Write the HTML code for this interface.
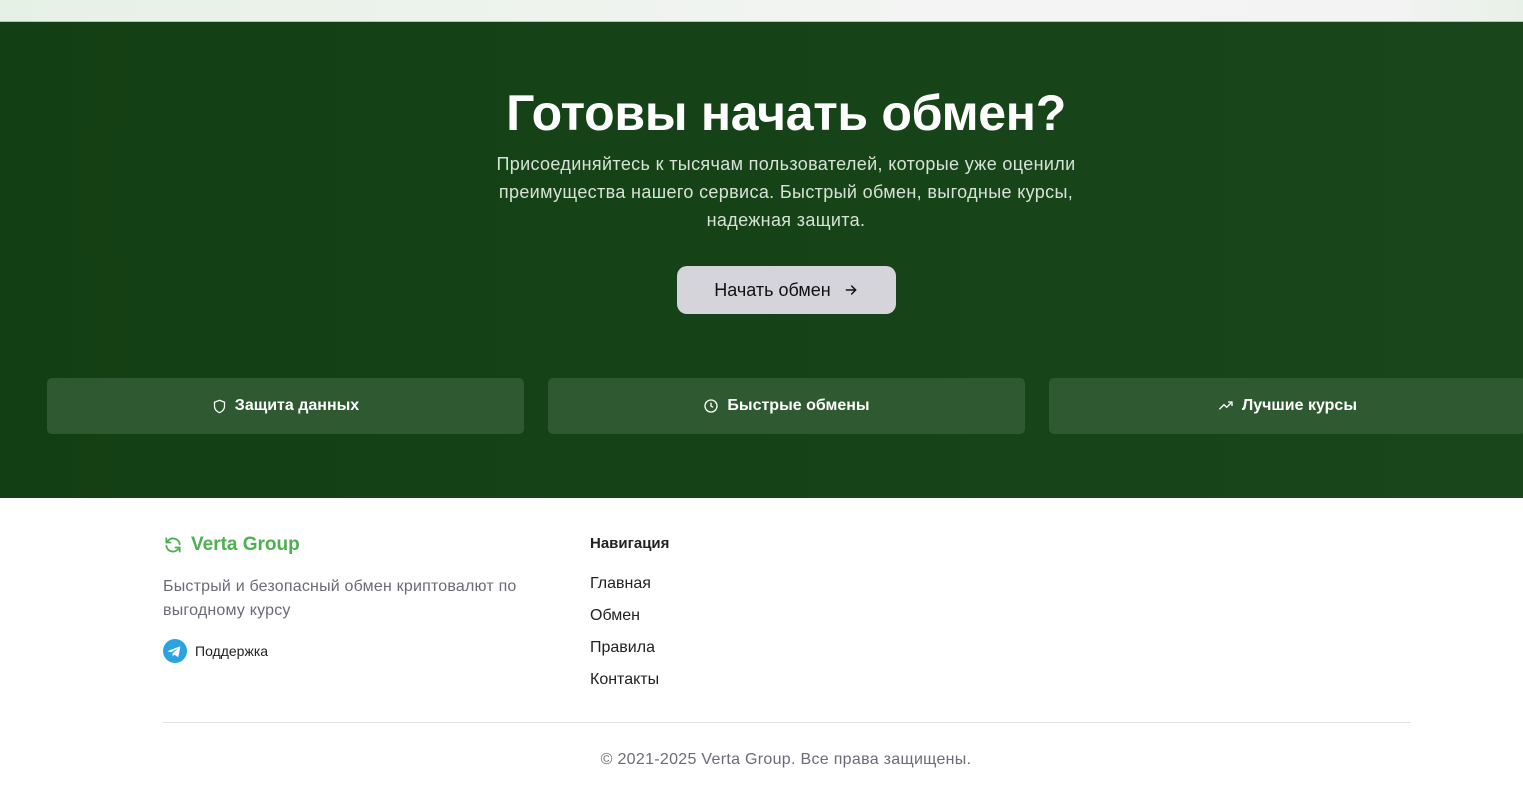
<!DOCTYPE html>
<html><head><meta charset="utf-8"><style>
*{margin:0;padding:0;box-sizing:border-box}
body{width:1523px;height:789px;overflow:hidden;background:#fff;font-family:"Liberation Sans","DejaVu Sans",sans-serif;position:relative}
.top{position:absolute;left:0;top:0;width:1523px;height:21px;background:linear-gradient(90deg,#e6f1e6,#f3f4f3 60%,#f4f3f4 90%,#e8f1e8)}
.hero{position:absolute;left:0;top:21px;width:1523px;height:477px;background:linear-gradient(90deg,#133f14,#1a461c);border-top:1px solid #a9cfa9}
h1{position:absolute;top:62px;left:286px;width:1000px;text-align:center;color:#fff;font-size:50px;font-weight:bold;letter-spacing:-0.3px}
.sub{position:absolute;top:128px;left:481px;width:610px;text-align:center;color:#d6e3d6;font-size:18px;line-height:28px;letter-spacing:0.35px}
.btn{position:absolute;left:677px;top:244px;width:219px;height:48px;border-radius:10px;background:#d6d4db;color:#111;font-size:18px;display:flex;align-items:center;justify-content:center;gap:12px}
.card{position:absolute;top:356px;width:477px;height:56px;border-radius:5px;background:#2f5a31;color:#fff;font-weight:bold;font-size:16px;display:flex;align-items:center;justify-content:center;gap:8px}
.t{position:absolute;color:#222;font-size:16px}
</style></head><body>
<div class="top"></div>
<div class="hero">
<h1>Готовы начать обмен?</h1>
<div class="sub">Присоединяйтесь к тысячам пользователей, которые уже оценили преимущества нашего сервиса. Быстрый обмен, выгодные курсы, надежная защита.</div>
<div class="btn">Начать обмен <svg width="16" height="16" viewBox="0 0 24 24" fill="none" stroke="#111" stroke-width="2.2" stroke-linecap="round"><path d="M5 12h14M13 6l6 6-6 6"/></svg></div>
<div class="card" style="left:47px"><svg width="15" height="15" viewBox="0 0 24 24" fill="none" stroke="#fff" stroke-width="2"><path d="M12 2l8 3v7c0 5-4 8-8 10-4-2-8-5-8-10V5z"/></svg>Защита данных</div>
<div class="card" style="left:548px"><svg width="16" height="16" viewBox="0 0 24 24" fill="none" stroke="#fff" stroke-width="2"><circle cx="12" cy="12" r="9"/><path d="M12 7v5l3 2"/></svg>Быстрые обмены</div>
<div class="card" style="left:1049px"><svg width="16" height="16" viewBox="0 0 24 24" fill="none" stroke="#fff" stroke-width="2"><path d="M2 17l7-7 4 4 8-8M15 6h6v6"/></svg>Лучшие курсы</div>
</div>
<div style="position:absolute;left:163px;top:534px;display:flex;align-items:center;gap:8px;color:#4caf50;font-weight:bold;font-size:19px"><svg width="20" height="20" viewBox="0 0 24 24" fill="none" stroke="#4caf50" stroke-width="2.2" stroke-linecap="round"><path d="M20 11a8 8 0 0 0-14-4l-2 2M4 4v5h5M4 13a8 8 0 0 0 14 4l2-2M20 20v-5h-5"/></svg>Verta Group</div>
<div style="position:absolute;left:163px;top:575px;width:390px;color:#6b6b76;font-size:16px;line-height:24px;letter-spacing:0.2px">Быстрый и безопасный обмен криптовалют по выгодному курсу</div>
<div style="position:absolute;left:163px;top:639px;display:flex;align-items:center;gap:8px;font-size:14px;color:#222"><svg width="24" height="24" viewBox="0 0 24 24"><circle cx="12" cy="12" r="12" fill="#2aa3e0"/><path d="M5.5 11.8l11-4.3c.5-.2 1 .1.8.9l-1.9 8.8c-.1.6-.5.8-1 .5l-2.9-2.1-1.4 1.3c-.2.2-.3.3-.6.3l.2-3 5.4-4.9c.2-.2 0-.3-.3-.1l-6.7 4.2-2.9-.9c-.6-.2-.6-.6.2-.7z" fill="#fff"/></svg>Поддержка</div>
<div class="t" style="left:590px;top:535px;font-weight:bold;font-size:15px">Навигация</div>
<div class="t" style="left:590px;top:575px">Главная</div>
<div class="t" style="left:590px;top:607px">Обмен</div>
<div class="t" style="left:590px;top:639px">Правила</div>
<div class="t" style="left:590px;top:671px">Контакты</div>
<div style="position:absolute;left:163px;top:722px;width:1248px;height:1px;background:#e3e3e6"></div>
<div style="position:absolute;top:751px;left:286px;width:1000px;text-align:center;color:#6b6b76;font-size:16px;letter-spacing:0.3px">© 2021-2025 Verta Group. Все права защищены.</div>
</body></html>
